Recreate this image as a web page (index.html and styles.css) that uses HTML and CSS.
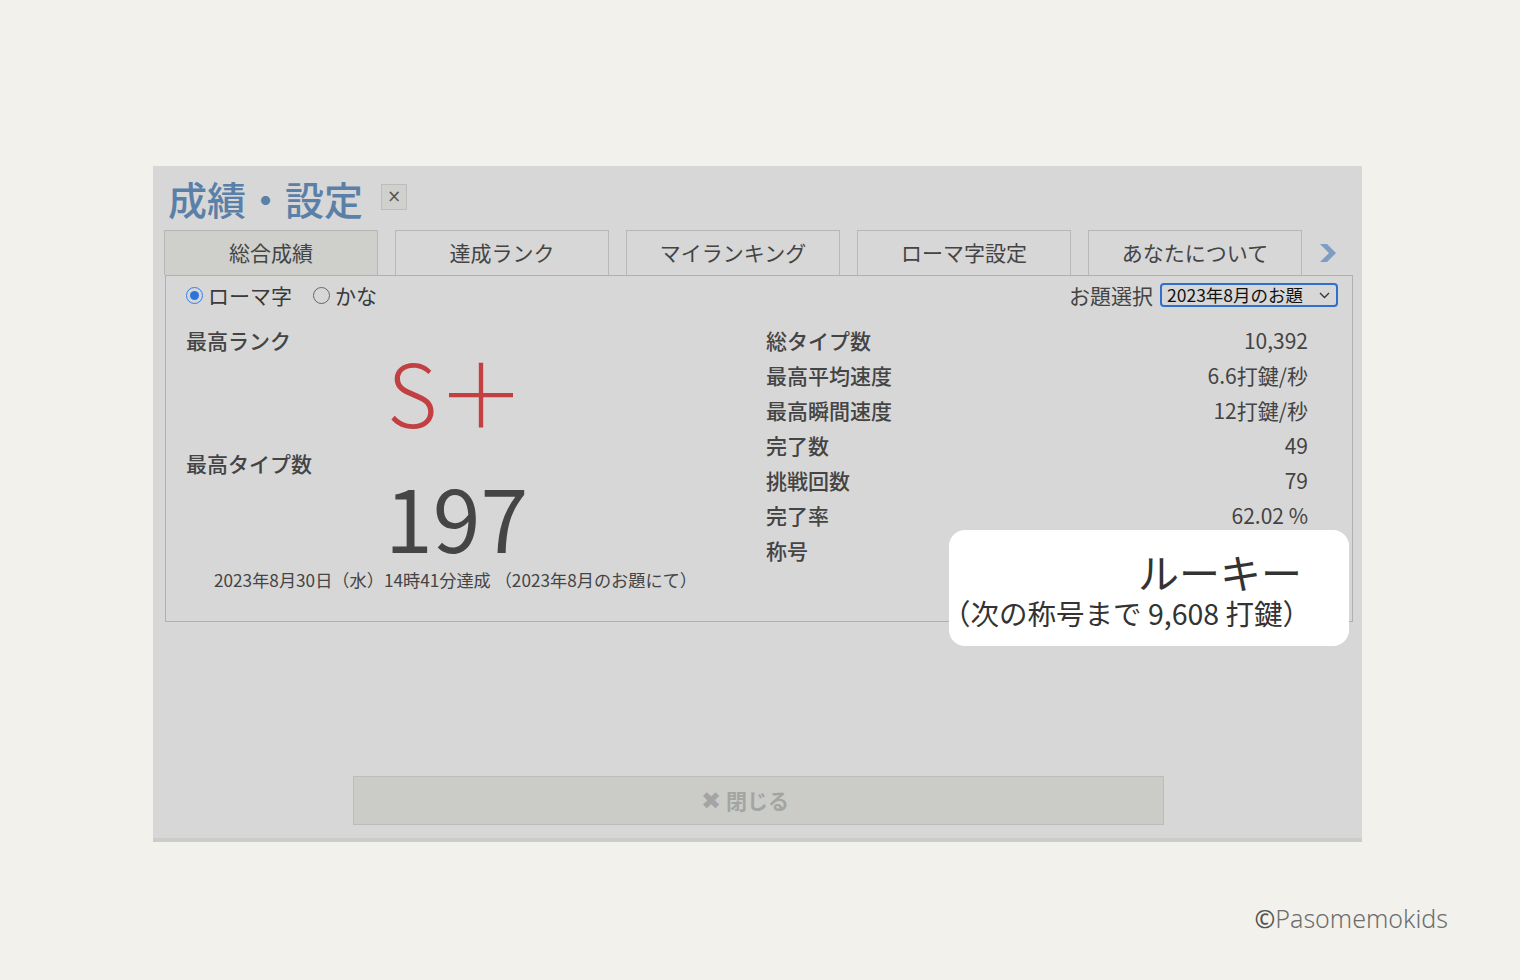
FILE: index.html
```html
<!DOCTYPE html>
<html lang="ja">
<head>
<meta charset="utf-8">
<title>成績・設定</title>
<link rel="stylesheet" href="styles.css">
</head>
<body>
<div class="panel">
  <div class="title-row">
    <h1 class="title">成績・設定</h1>
    <span class="x-btn">×</span>
  </div>
  <div class="tabs">
    <div class="tab active">総合成績</div>
    <div class="tab">達成ランク</div>
    <div class="tab">マイランキング</div>
    <div class="tab">ローマ字設定</div>
    <div class="tab">あなたについて</div>
    <svg class="tab-next" width="17" height="20" viewBox="0 0 17 20"><polygon points="0,1 7,1 16,10 7,19 0,19 9,10" fill="#7d9dc2"/></svg>
  </div>
  <div class="content">
    <div class="option-row">
      <div class="radios">
        <span class="radio checked"></span><span class="radio-label">ローマ字</span>
        <span class="radio"></span><span class="radio-label">かな</span>
      </div>
      <div class="topic">
        <span class="topic-label">お題選択</span>
        <div class="select">
          <span>2023年8月のお題</span>
          <svg width="11" height="7" viewBox="0 0 11 7"><polyline points="1,1 5.5,5.5 10,1" fill="none" stroke="#333" stroke-width="1.3"/></svg>
        </div>
      </div>
    </div>
    <div class="stats">
      <div class="best">
        <div class="label">最高ランク</div>
        <div class="rank">S＋</div>
        <div class="label">最高タイプ数</div>
        <div class="big-num">197</div>
        <div class="date">2023年8月30日（水）14時41分達成 （2023年8月のお題にて）</div>
      </div>
      <div class="totals">
        <div class="row"><span>総タイプ数</span><span>10,392</span></div>
        <div class="row"><span>最高平均速度</span><span>6.6打鍵/秒</span></div>
        <div class="row"><span>最高瞬間速度</span><span>12打鍵/秒</span></div>
        <div class="row"><span>完了数</span><span>49</span></div>
        <div class="row"><span>挑戦回数</span><span>79</span></div>
        <div class="row"><span>完了率</span><span>62.02 %</span></div>
        <div class="row"><span>称号</span><span></span></div>
      </div>
    </div>
  </div>
  <div class="callout">
    <div class="callout-title">ルーキー</div>
    <div class="callout-sub">（次の称号まで 9,608 打鍵）</div>
  </div>
  <div class="close-row">
    <div class="close-btn"><span class="close-x">✖</span> 閉じる</div>
  </div>
</div>
<div class="credit"><span class="copy">©</span>Pasomemokids</div>
</body>
</html>
```
FILE: styles.css
```css
html, body {
  margin: 0;
  padding: 0;
}
body {
  background: #f2f1ec;
  font-family: "Noto Sans CJK JP", "Noto Sans", sans-serif;
  color: #444;
  width: 1520px;
  height: 980px;
  overflow: hidden;
}
.panel {
  position: relative;
  margin: 166px 0 0 153px;
  width: 1209px;
  height: 676px;
  box-sizing: border-box;
  background: #d7d7d7;
  border-bottom: 4px solid #cccdc9;
  padding: 0 9px 0 11px;
  display: flex;
  flex-direction: column;
}
.title-row {
  height: 64px;
  display: flex;
  align-items: center;
  padding-left: 4px;
}
.title {
  margin: 0;
  font-size: 39px;
  font-weight: 500;
  color: #5a80a8;
  line-height: 64px;
}
.x-btn {
  margin-left: 18px;
  margin-top: -2px;
  width: 26px;
  height: 26px;
  box-sizing: border-box;
  border: 1px solid #bdbdbb;
  background: #d0d0cd;
  color: #555;
  font-size: 17px;
  line-height: 22px;
  text-align: center;
  font-family: "DejaVu Sans", sans-serif;
}
.tabs {
  height: 45px;
  display: flex;
  gap: 17px;
  align-items: stretch;
}
.tab {
  width: 214px;
  box-sizing: border-box;
  border: 1px solid #b7b7b5;
  border-bottom: none;
  font-size: 21px;
  line-height: 42px;
  text-align: center;
  color: #444;
}
.tab.active {
  background: #cfcfcb;
}
.tab-next {
  align-self: center;
  margin-left: 1px;
}
.content {
  margin-left: 1px;
  height: 347px;
  box-sizing: border-box;
  border: 1px solid #b0b0ae;
  padding: 4px 14px 0 20px;
}
.option-row {
  height: 30px;
  display: flex;
  justify-content: space-between;
  align-items: center;
}
.radios {
  display: flex;
  align-items: center;
  font-size: 21px;
  color: #3a3a3a;
}
.radio {
  width: 17px;
  height: 17px;
  box-sizing: border-box;
  border-radius: 50%;
  border: 1.5px solid #666;
  margin-right: 5px;
  display: flex;
  align-items: center;
  justify-content: center;
}
.radio.checked {
  border-color: #3a7ddf;
}
.radio.checked::after {
  content: "";
  width: 9px;
  height: 9px;
  border-radius: 50%;
  background: #2e73dc;
}
.radio-label {
  margin-right: 21px;
}
.topic {
  display: flex;
  align-items: center;
  gap: 7px;
}
.topic-label {
  font-size: 21px;
  color: #444;
}
.select {
  width: 178px;
  height: 24px;
  box-sizing: border-box;
  border: 2px solid #2f6fd0;
  border-radius: 4px;
  display: flex;
  align-items: center;
  justify-content: space-between;
  padding: 0 6px 0 5px;
  font-size: 17.5px;
  color: #111;
  line-height: 20px;
}
.stats {
  margin-top: 13px;
  display: grid;
  grid-template-columns: 580px 542px;
}
.label {
  font-size: 21px;
  line-height: 35px;
  font-weight: 500;
  color: #444;
}
.rank {
  font-size: 87px;
  line-height: 65px;
  font-weight: 300;
  color: #c24042;
  padding-left: 201px;
  margin-bottom: 22.5px;
}
.big-num {
  font-size: 86px;
  line-height: 69px;
  font-weight: 400;
  color: #454545;
  padding-left: 199px;
}
.date {
  margin-top: 18px;
  font-size: 17.2px;
  line-height: 24px;
  padding-left: 28px;
  color: #444;
}
.totals .row {
  display: flex;
  justify-content: space-between;
  font-size: 21px;
  line-height: 35px;
  color: #444;
}
.totals .row span:first-child {
  font-weight: 500;
}
.callout {
  position: absolute;
  left: 796px;
  top: 364px;
  width: 400px;
  height: 116px;
  box-sizing: border-box;
  background: #fff;
  border-radius: 16px;
  padding: 18px 47px 0 0;
  text-align: right;
  color: #333;
  white-space: nowrap;
}
.callout-title {
  font-size: 41px;
  line-height: 46px;
}
.callout-sub {
  font-size: 28.5px;
  line-height: 38px;
  text-align: left;
  margin-left: -7px;
}
.close-row {
  margin-top: 154px;
  display: flex;
  justify-content: center;
  padding-right: 1px;
}
.close-btn {
  width: 811px;
  height: 49px;
  box-sizing: border-box;
  border: 1px solid #bcbcba;
  background: #cbccc7;
  color: #a4a4a4;
  font-size: 21px;
  font-weight: 700;
  line-height: 47px;
  text-align: center;
  padding-right: 26px;
}
.close-x {
  font-family: "DejaVu Sans", sans-serif;
  font-size: 24px;
}
.credit {
  margin-top: 62px;
  text-align: right;
  padding-right: 72px;
  font-family: "Noto Sans", sans-serif;
  font-weight: 300;
  font-size: 25px;
  line-height: 28px;
  color: #6e6e6e;
}
.copy {
  font-weight: 500;
  color: #555;
}
```
